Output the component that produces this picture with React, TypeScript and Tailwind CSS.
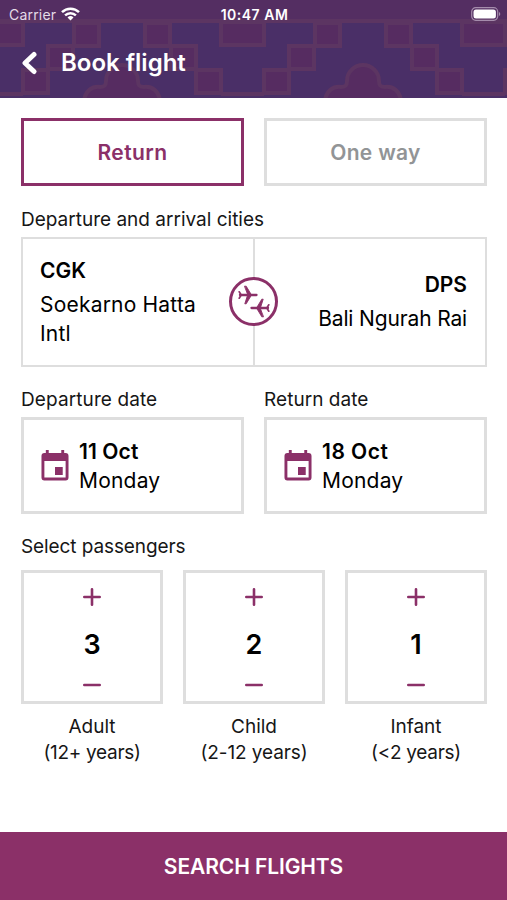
import React from "react";

const tiles = [-119, 122, 363, 604];
const steps = [
  [22, 23],
  [48, 46],
  [73, 70],
];

function HeaderPattern() {
  return (
    <svg className="absolute inset-0 h-full w-full" viewBox="0 0 507 98" preserveAspectRatio="none">
      <rect width="507" height="98" fill="#4a2f67" />
      <rect width="507" height="21" fill="#542e62" />
      <g fill="#562c61" stroke="#5c3562" strokeWidth="4">
        <path d="M-4 21H511" />
        {tiles.map((c) => (
          <g key={c}>
            <rect x={c + 99} y="22" width="43" height="23" />
            {steps.map(([x, y]) => (
              <React.Fragment key={x}>
                <rect x={c + x + 1} y={y} width="25" height="23" />
                <rect x={c - x - 26} y={y} width="25" height="23" />
              </React.Fragment>
            ))}
            <path d={`M${c + 99} 94h43`} />
            <path
              d={`M${c - 38} 101c1-10 8-15 16-14c5 0 6-2 6-6a16 16 0 0 1 32 0c0 4 1 6 6 6c8-1 15 4 16 14z`}
            />
          </g>
        ))}
      </g>
    </svg>
  );
}

function Plane({ className }: { className?: string }) {
  return (
    <svg className={className} viewBox="0 0 20 20" fill="none" stroke="#8b3068" strokeLinecap="round" strokeLinejoin="round">
      <path d="M2 10H18.500" strokeWidth="2.300" />
      <path d="M6.800 1.200h1.400L13.500 10L8.200 18.800H6.800L9.600 10z" fill="#8b3068" strokeWidth="0.900" />
      <path d="M1.200 6.800L3.200 10L1.200 13.200" strokeWidth="1.700" />
    </svg>
  );
}

function Calendar() {
  return (
    <svg className="h-[31px] w-[28px] shrink-0" viewBox="0 0 29 31" preserveAspectRatio="none" fill="#8b3068">
      <path d="M5 0h3v3h13V0h3v3h1.500a3 3 0 0 1 3 3v21.500a3 3 0 0 1-3 3h-22a3 3 0 0 1-3-3V6a3 3 0 0 1 3-3H5zM3.500 11v16.500h22V11z" />
      <rect x="14.500" y="17" width="8" height="8" />
    </svg>
  );
}

function DateField({ label, date, labelClass, dateClass }: { label: string; date: string; labelClass: string; dateClass: string }) {
  return (
    <div className="flex-1">
      <div className={`h-[29px] text-[19px] leading-[29px] whitespace-nowrap ${labelClass}`}>{label}</div>
      <div className="mt-[3px] flex h-[97px] items-center border-[3px] border-[#dedede] pl-[17px]">
        <Calendar />
        <div className="ml-[10px] text-[21px] leading-[29px] text-black">
          <div className={`font-semibold ${dateClass}`}>{date}</div>
          <div className="tracking-[0.2px]">Monday</div>
        </div>
      </div>
    </div>
  );
}

function Passenger({ count, name, ages, agesClass }: { count: number; name: string; ages: string; agesClass: string }) {
  return (
    <div className="flex flex-1 flex-col items-center">
      <div className="flex h-[134px] w-full flex-col items-center border-[3px] border-[#dedede] pt-[15px]">
        <svg className="h-[18px] w-[18px]" viewBox="0 0 18 18" stroke="#8b3068" strokeWidth="2.6" strokeLinecap="round">
          <path d="M1.300 9H16.700M9 1.300V16.700" />
        </svg>
        <div className="mt-[20px] h-[38px] text-[27px] leading-[38px] font-semibold text-black">{count}</div>
        <svg className="mt-[12px] h-[18px] w-[18px]" viewBox="0 0 18 18" stroke="#8b3068" strokeWidth="2.6" strokeLinecap="round">
          <path d="M1.300 9H16.700" />
        </svg>
      </div>
      <div className="mt-[10px] text-center text-[19px] leading-[26px] whitespace-nowrap">
        <div>{name}</div>
        <div className={agesClass}>{ages}</div>
      </div>
    </div>
  );
}

export default function App() {
  return (
    <div className="flex h-[900px] w-[507px] flex-col overflow-hidden bg-white font-[Inter,sans-serif] text-[#161616]">
      <header className="relative h-[98px] shrink-0 text-white">
        <HeaderPattern />
        <div className="relative flex h-[28px] items-center justify-between pr-[6px] pl-[9px]">
          <div className="flex w-[100px] items-center text-[14px] text-[#e4dbe7]">
            <span className="tracking-[0.2px]">Carrier</span>
            <svg className="ml-[5px] h-[14px] w-[19px]" viewBox="0 0 19 14" fill="none" stroke="#fff" strokeWidth="2.500">
              <path d="M1 5.200a12.200 12.200 0 0 1 17 0M4.100 8.400a7.800 7.800 0 0 1 10.800 0" />
              <path d="M9.500 13.500L6.500 10.500a4.300 4.300 0 0 1 6 0z" fill="#fff" stroke="none" />
            </svg>
          </div>
          <span className="-ml-[1px] text-[14px] font-semibold tracking-[0.5px] whitespace-nowrap">10:47 AM</span>
          <div className="flex w-[100px] justify-end">
            <svg className="h-[14px] w-[30px]" viewBox="0 0 30 14" fill="none">
              <rect x="0.700" y="0.700" width="26" height="12.600" rx="4" stroke="#a58cac" strokeWidth="1.200" />
              <rect x="2.500" y="2.500" width="22.400" height="9" rx="2.500" fill="#fff" />
              <path d="M28 5v4a2.200 2.200 0 0 0 0-4" fill="#a58cac" />
            </svg>
          </div>
        </div>
        <div className="relative flex h-[69px] items-center pl-[21px]">
          <svg className="h-[24px] w-[17px]" viewBox="0 0 17 24" fill="none" stroke="#fff" strokeWidth="5" strokeLinecap="round" strokeLinejoin="round">
            <path d="M13 3.500L4 12L13 20.500" />
          </svg>
          <h1 className="ml-[23px] text-[24px] font-semibold">Book flight</h1>
        </div>
      </header>

      <main className="flex flex-1 flex-col pt-[20px] pr-[20px] pl-[21px]">
        <div className="flex h-[68px] gap-[20px]">
          <button className="flex-1 border-[3px] border-[#8b3068] pt-[2px] text-[21px] font-semibold tracking-[0.4px] text-[#8b3068]">Return</button>
          <button className="flex-1 border-[3px] border-[#dedede] pt-[2px] text-[21px] font-semibold tracking-[0.3px] text-[#929496]">One way</button>
        </div>

        <div className="mt-[19px] h-[29px] text-[19px] leading-[29px] whitespace-nowrap">Departure and arrival cities</div>
        <div className="relative mt-[3px] flex h-[130px] border-2 border-[#dedede] pb-px text-[21px] leading-[29px] text-black">
          <div className="-mb-px flex flex-1 flex-col justify-center border-r-2 border-[#dedede] pl-[17px]">
            <div className="mb-[5px] font-semibold">CGK</div>
            <div className="w-[170px] tracking-[0.2px]">Soekarno Hatta Intl</div>
          </div>
          <div className="flex flex-1 flex-col justify-center pr-[18px] text-right">
            <div className="mb-[5px] font-semibold">DPS</div>
            <div className="tracking-[-0.15px] whitespace-nowrap">Bali Ngurah Rai</div>
          </div>
          <div className="absolute top-[38px] left-[206px] h-[49px] w-[49px] rounded-full border-[3px] border-[#8b3068] bg-white">
            <Plane className="absolute top-[5px] left-[6px] h-[20px] w-[20px]" />
            <Plane className="absolute top-[18px] left-[18px] h-[20px] w-[20px] rotate-180" />
          </div>
        </div>

        <div className="mt-[18px] flex gap-[20px]">
          <DateField label="Departure date" date="11 Oct" labelClass="tracking-[0.1px]" dateClass="tracking-[0.100px]" />
          <DateField label="Return date" date="18 Oct" labelClass="tracking-[0.05px]" dateClass="tracking-[0.5px]" />
        </div>

        <div className="mt-[18px] h-[29px] text-[19px] leading-[29px] tracking-[-0.1px]">Select passengers</div>
        <div className="mt-[9px] flex gap-[20px]">
          <Passenger count={3} name="Adult" ages="(12+ years)" agesClass="tracking-[-0.3px]" />
          <Passenger count={2} name="Child" ages="(2-12 years)" agesClass="tracking-[-0.1px]" />
          <Passenger count={1} name="Infant" ages="(<2 years)" agesClass="tracking-[-0.3px]" />
        </div>
      </main>

      <button className="h-[68px] shrink-0 bg-[#8b3068] pt-[2px] text-[21px] font-semibold tracking-[-0.1px] text-white">SEARCH FLIGHTS</button>
    </div>
  );
}
